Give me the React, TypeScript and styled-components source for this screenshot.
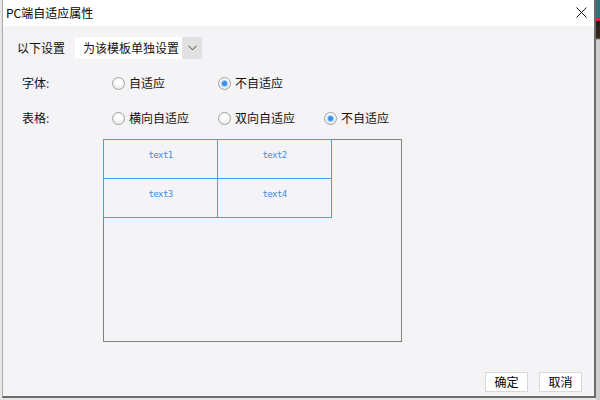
import React from "react";
import styled, { createGlobalStyle } from "styled-components";

const Global = createGlobalStyle`
  html, body { margin: 0; padding: 0; }
  body {
    font-family: "Noto Sans CJK SC", "Noto Sans", sans-serif;
    font-size: 12px;
    color: #111;
  }
  * { box-sizing: border-box; }
`;

const Backdrop = styled.div`
  width: 600px;
  height: 400px;
  overflow: hidden;
  display: flex;
  align-items: flex-start;
  padding-left: 2px;
  background: #e6e6e6;
`;

const SideStrip = styled.div`
  width: 4px;
  height: 400px;
  background: linear-gradient(
    to bottom,
    #33707c 0px,
    #33707c 18px,
    #c8313a 18px,
    #c8313a 21px,
    #1d1d1d 21px,
    #3a2a18 38px,
    #cfcfcf 40px,
    #cfcfcf 100%
  );
`;

const Dialog = styled.div`
  width: 594px;
  height: 398px;
  display: flex;
  flex-direction: column;
  background: #f4f4f6;
  border-left: 1px solid #a9a9a9;
  border-right: 2px solid #6c6c6c;
  border-bottom: 2px solid #6c6c6c;
`;

const TitleBar = styled.div`
  height: 26px;
  flex: none;
  display: flex;
  align-items: center;
  justify-content: space-between;
  background: #ffffff;
  padding: 0 6px 0 3px;
`;

const Title = styled.span`
  font-size: 12px;
  line-height: 14px;
  color: #000;
  margin-top: -1px;
`;

const CloseButton = styled.button`
  width: 14px;
  height: 14px;
  border: none;
  padding: 0;
  background: transparent;
  display: flex;
  align-items: center;
  justify-content: center;
  margin-top: -1px;
`;

const Body = styled.div`
  flex: 1;
  display: flex;
  flex-direction: column;
  padding: 11px 0 0 14px;
`;

const SettingRow = styled.div`
  display: flex;
  align-items: center;
  height: 22px;
`;

const SettingLabel = styled.span`
  width: 58px;
  line-height: 14px;
`;

const Select = styled.div`
  display: flex;
  width: 127px;
  height: 22px;
  background: #ffffff;
`;

const SelectText = styled.span`
  flex: 1;
  padding-left: 8px;
  line-height: 22px;
  white-space: nowrap;
`;

const SelectArrow = styled.span`
  width: 20px;
  background: #e1e1e3;
  display: flex;
  align-items: center;
  justify-content: center;
`;

const OptionRow = styled.div<{ $top: number }>`
  display: flex;
  align-items: center;
  height: 20px;
  margin-top: ${(p) => p.$top}px;
  padding-left: 5px;
`;

const RowLabel = styled.span`
  width: 90px;
  line-height: 14px;
`;

const Colon = styled.span`
  color: #5a3f86;
`;

const RadioOption = styled.label`
  width: 106px;
  display: flex;
  align-items: center;
  gap: 4px;
  line-height: 14px;
`;

const RadioCircle = styled.span<{ $checked?: boolean }>`
  position: relative;
  width: 13px;
  height: 13px;
  border-radius: 50%;
  border: 1px solid #a2a2a2;
  background: radial-gradient(circle at 50% 35%, #ffffff 25%, #e2e2e2 100%);
  flex: none;
  &::after {
    content: "";
    display: ${(p) => (p.$checked ? "block" : "none")};
    position: absolute;
    left: 3px;
    top: 3px;
    width: 5px;
    height: 5px;
    border-radius: 50%;
    background: #3b8ff0;
    box-shadow: 0 0 0 1px #a9cdf6;
  }
`;

const Preview = styled.div`
  margin: 11px 0 0 86px;
  width: 299px;
  height: 203px;
  border: 1px solid #828282;
`;

const CellGrid = styled.div`
  margin: -1px 0 0 -1px;
  display: grid;
  grid-template-columns: 114px 114px;
  grid-template-rows: 39px 39px;
  width: 229px;
  border-top: 1px solid #4f9bec;
  border-left: 1px solid #4f9bec;
`;

const Cell = styled.div`
  border-right: 1px solid #4f9bec;
  border-bottom: 1px solid #4f9bec;
  text-align: center;
  padding-top: 10px;
  font-family: "DejaVu Sans Mono", "Liberation Mono", monospace;
  font-size: 9px;
  letter-spacing: -0.6px;
  line-height: 11px;
  color: #3d8deb;
  background: #f4f4f6;
`;

const Footer = styled.div`
  margin-top: auto;
  display: flex;
  justify-content: flex-end;
  gap: 11px;
  padding: 0 12px 4px 0;
`;

const Button = styled.button`
  width: 43px;
  height: 20px;
  padding: 0;
  background: #ffffff;
  border: 1px solid #d8d8d8;
  font-family: "Noto Sans CJK SC", "Noto Sans", sans-serif;
  font-size: 12px;
  line-height: 18px;
  color: #000;
`;

const fontOptions = [
  { label: "自适应", checked: false },
  { label: "不自适应", checked: true },
];

const tableOptions = [
  { label: "横向自适应", checked: false },
  { label: "双向自适应", checked: false },
  { label: "不自适应", checked: true },
];

export default function App() {
  return (
    <>
      <Global />
      <Backdrop>
        <Dialog>
          <TitleBar>
            <Title>PC端自适应属性</Title>
            <CloseButton aria-label="关闭">
              <svg width="11" height="11" viewBox="0 0 11 11">
                <path d="M0.5 0.5 L10.5 10.5 M10.5 0.5 L0.5 10.5" stroke="#111" strokeWidth="1" />
              </svg>
            </CloseButton>
          </TitleBar>
          <Body>
            <SettingRow>
              <SettingLabel>以下设置</SettingLabel>
              <Select>
                <SelectText>为该模板单独设置</SelectText>
                <SelectArrow>
                  <svg width="9" height="6" viewBox="0 0 9 6">
                    <path d="M0.5 0.8 L4.5 4.8 L8.5 0.8" fill="none" stroke="#444" strokeWidth="1" />
                  </svg>
                </SelectArrow>
              </Select>
            </SettingRow>
            <OptionRow $top={14}>
              <RowLabel>
                字体<Colon>:</Colon>
              </RowLabel>
              {fontOptions.map((o) => (
                <RadioOption key={o.label}>
                  <RadioCircle $checked={o.checked} />
                  {o.label}
                </RadioOption>
              ))}
            </OptionRow>
            <OptionRow $top={15}>
              <RowLabel>
                表格<Colon>:</Colon>
              </RowLabel>
              {tableOptions.map((o) => (
                <RadioOption key={o.label}>
                  <RadioCircle $checked={o.checked} />
                  {o.label}
                </RadioOption>
              ))}
            </OptionRow>
            <Preview>
              <CellGrid>
                {["text1", "text2", "text3", "text4"].map((t) => (
                  <Cell key={t}>{t}</Cell>
                ))}
              </CellGrid>
            </Preview>
            <Footer>
              <Button>确定</Button>
              <Button>取消</Button>
            </Footer>
          </Body>
        </Dialog>
        <SideStrip />
      </Backdrop>
    </>
  );
}
